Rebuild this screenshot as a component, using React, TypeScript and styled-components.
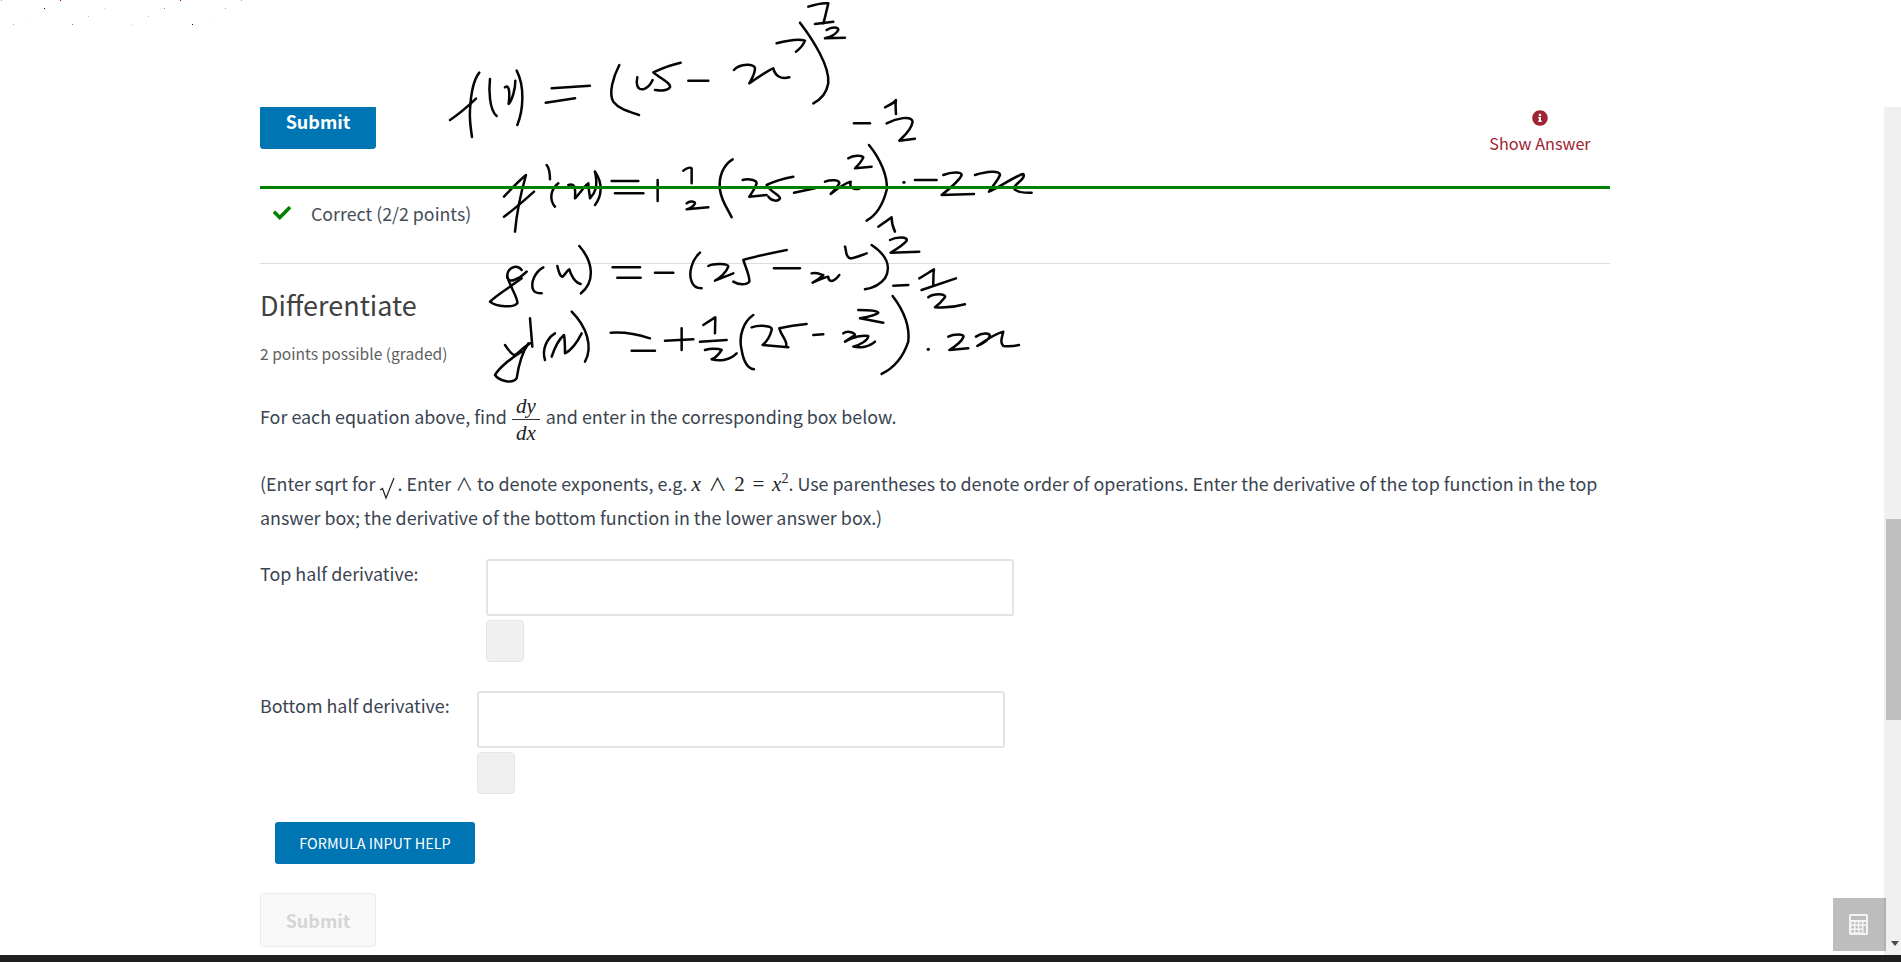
import React from "react";
import styled, { createGlobalStyle } from "styled-components";
import { FaCheck, FaInfoCircle } from "react-icons/fa";

const GlobalStyle = createGlobalStyle`
  html, body {
    margin: 0;
    padding: 0;
    height: 100%;
    overflow: hidden;
    background: #fff;
  }
  body {
    font-family: "Noto Sans CJK SC", "Open Sans", sans-serif;
    color: #3a4450;
  }
`;

const Page = styled.div`
  position: relative;
  width: 1901px;
  height: 962px;
  overflow: hidden;
  background: #fff;
`;

const Content = styled.main`
  width: 1350px;
  margin-left: 260px;
  padding-top: 107px;
  display: flex;
  flex-direction: column;
`;

const ActionRow = styled.div`
  display: flex;
  justify-content: space-between;
  height: 79px;
`;

const SubmitButton = styled.button<{ $disabled?: boolean }>`
  width: 116px;
  height: ${(p) => (p.$disabled ? "54px" : "42px")};
  padding: 0 0 ${(p) => (p.$disabled ? "0" : "15px")};
  border: 1px solid ${(p) => (p.$disabled ? "#ececec" : "#0075b4")};
  border-radius: ${(p) => (p.$disabled ? "3px" : "0 0 3px 3px")};
  background: ${(p) => (p.$disabled ? "#f9f9f9" : "#0075b4")};
  color: ${(p) => (p.$disabled ? "#d5d5d5" : "#fff")};
  font: 700 18px/24px "Noto Sans CJK SC", sans-serif;
`;

const ShowAnswer = styled.div`
  width: 102px;
  margin-right: 19px;
  padding-top: 3px;
  display: flex;
  flex-direction: column;
  align-items: center;
  gap: 5px;
  color: #9e2333;
  font-size: 16.2px;
  line-height: 24px;
  white-space: nowrap;

  svg {
    width: 16px;
    height: 16px;
  }
`;

const StatusBar = styled.div`
  position: relative;
  z-index: 2;
  height: 3px;
  background: #008100;
`;

const StatusRow = styled.div`
  height: 75px;
  padding: 10px 0 0 13px;
  box-sizing: border-box;
  display: flex;
  align-items: flex-start;
  gap: 20px;
  border-bottom: 1px solid #dddddd;
  font-size: 17.8px;
  line-height: 28px;
  color: #454d58;

  svg {
    width: 18px;
    height: 18px;
    margin-top: 5px;
    color: #008100;
  }
`;

const Title = styled.h3`
  margin: 23px 0 0;
  font-size: 27px;
  font-weight: 400;
  line-height: 36px;
  color: #414141;
`;

const Grading = styled.div`
  margin-top: 18px;
  font-size: 15.6px;
  line-height: 24px;
  color: #5e5e5e;
`;

const Prompt = styled.p`
  margin: 28px 0 0;
  font-size: 17.9px;
  line-height: 34px;
  color: #3a4450;
`;

const Fraction = styled.span`
  display: inline-flex;
  flex-direction: column;
  align-items: center;
  vertical-align: middle;
  margin: 0 6px 0 5px;
  font: italic 21px/26px "Liberation Serif", serif;
  color: #222;

  span + span {
    border-top: 1px solid #333;
  }

  span {
    padding: 0 4px;
  }
`;

const Instructions = styled.p`
  margin: 20px 0 0;
  font-size: 17.9px;
  line-height: 34px;
  color: #3a4450;
`;

const MathText = styled.span`
  font-family: "Liberation Serif", serif;
  font-size: 21px;
  line-height: 1;
  word-spacing: 2.5px;
  color: #222;

  i {
    font-style: italic;
  }

  b {
    font: 400 18px/1 "Noto Sans CJK SC", sans-serif;
  }

  sup {
    font-size: 14px;
    line-height: 0;
  }
`;

const Radical = styled.svg`
  width: 18px;
  height: 24px;
  margin-left: 4px;
  vertical-align: -9px;
`;

const Field = styled.div<{ $first?: boolean }>`
  display: flex;
  margin-top: ${(p) => (p.$first ? "25px" : "29px")};
`;

const FieldLabel = styled.label<{ $width: number }>`
  width: ${(p) => p.$width}px;
  flex: none;
  font-size: 17.9px;
  line-height: 28px;
  color: #3a4450;
`;

const FieldBody = styled.div`
  display: flex;
  flex-direction: column;
  gap: 4px;
`;

const AnswerInput = styled.input`
  width: 528px;
  height: 57px;
  box-sizing: border-box;
  border: 2px solid #e3e3e3;
  border-radius: 3px;
  background: #fff;
`;

const StatusBox = styled.div`
  width: 38px;
  height: 42px;
  box-sizing: border-box;
  border: 1px solid #e5e5e5;
  border-radius: 4px;
  background: #f0f0f0;
`;

const HelpButton = styled.button`
  width: 200px;
  height: 42px;
  margin: 28px 0 0 15px;
  padding: 0;
  border: 0;
  border-radius: 3px;
  background: #0075b4;
  color: #fff;
  font: 400 14.4px/20px "Noto Sans CJK SC", sans-serif;
`;

const FooterSubmit = styled.div`
  margin-top: 29px;
`;

const BottomBar = styled.div`
  position: absolute;
  left: 0;
  right: 0;
  bottom: 0;
  z-index: 4;
  height: 7px;
  background: #1f1f1f;
`;

const Scrollbar = styled.div`
  position: absolute;
  top: 107px;
  right: 0;
  bottom: 0;
  width: 17px;
  z-index: 2;
  background: #f0f0f0;
`;

const ScrollThumb = styled.div`
  position: absolute;
  top: 412px;
  right: 0;
  width: 15px;
  height: 201px;
  background: #bfbfbf;
`;

const ScrollArrow = styled.div`
  position: absolute;
  right: 2px;
  bottom: 16px;
  width: 0;
  height: 0;
  border-left: 4.5px solid transparent;
  border-right: 4.5px solid transparent;
  border-top: 5px solid #4a4a4a;
`;

const CalculatorButton = styled.div`
  position: absolute;
  left: 1833px;
  top: 898px;
  z-index: 3;
  width: 53px;
  height: 53px;
  box-sizing: border-box;
  border-right: 2px solid #b0b0b0;
  display: flex;
  align-items: center;
  justify-content: center;
  background: #bdbdbd;
`;

const InkLayer = styled.svg`
  position: absolute;
  left: 0;
  top: 0;
  z-index: 1;
  width: 1901px;
  height: 962px;
  pointer-events: none;
`;

// handwriting strokes, each group in the pixel space of a 3x crop at (x, y)
const strokes: { x: number; y: number; paths: string[]; dots?: [number, number][] }[] = [
  {
    x: 440,
    y: 0,
    paths: [
      "M118 218C100 240 92 290 90 330C88 355 92 385 96 411",
      "M30 360C60 340 85 318 108 296",
      "M150 237C146 270 148 330 170 348",
      "M195 262C212 250 208 295 206 312C216 300 226 270 226 242",
      "M230 212C255 260 250 330 232 375",
      "M335 265L450 257",
      "M317 308L405 295",
      "M538 195C520 230 505 280 520 305C540 330 570 335 597 345",
      "M592 232C588 250 590 270 610 268C630 262 635 245 638 240",
      "M722 188C690 195 665 205 640 217C660 235 695 250 690 262C680 275 660 272 645 270",
      "M745 242L805 242",
      "M882 210C900 190 945 190 945 205C945 225 930 245 928 250C950 235 985 210 1000 205C1005 225 1020 240 1048 232",
      "M1010 130C1040 122 1075 115 1095 122C1090 135 1075 150 1068 155",
      "M1080 68C1120 120 1170 200 1165 250C1160 280 1140 300 1120 310",
      "M1105 20C1130 12 1150 8 1165 10C1160 30 1155 55 1150 70",
      "M1125 72L1180 65",
      "M1160 90C1175 80 1195 80 1195 90C1190 100 1175 110 1155 115L1215 113",
    ],
  },
  {
    x: 490,
    y: 100,
    paths: [
      "M1092 70L1140 70",
      "M1185 22C1200 15 1215 5 1218 0C1215 15 1218 30 1218 42",
      "M1190 70C1220 55 1265 45 1268 65C1265 90 1240 110 1228 122L1275 116",
      "M42 290C65 265 90 240 108 225C95 270 80 340 75 395",
      "M42 350C70 330 110 295 132 275",
      "M170 195C178 205 180 225 180 238",
      "M205 250C180 270 178 300 195 320",
      "M235 255C250 250 258 255 255 295C270 280 285 255 295 250C295 270 300 285 300 295C315 280 325 260 315 215",
      "M315 215C340 250 335 290 315 315",
      "M365 243L445 243",
      "M375 280L460 280",
      "M480 263L538 263",
      "M503 240L503 303",
      "M580 212C590 205 600 200 605 205L605 250",
      "M585 262L632 262",
      "M590 310C600 300 615 305 615 310C610 320 600 325 590 328L655 322",
      "M728 178C700 195 685 230 690 270C695 305 715 330 725 352",
      "M758 240C775 235 800 240 800 250C795 265 785 280 778 290L830 285",
      "M910 230C880 235 850 245 830 255C840 275 870 285 870 295C865 305 845 305 835 290",
      "M912 278L975 265",
      "M1005 245C1025 238 1050 240 1048 250C1042 262 1030 275 1022 282C1040 268 1065 250 1082 245C1078 260 1085 270 1108 266",
      "M1075 175C1090 165 1115 165 1120 172C1115 185 1105 195 1095 205L1145 200",
      "M1137 135C1170 175 1195 230 1190 270C1180 310 1160 345 1130 362",
      "M1275 240L1340 240",
      "M1360 225C1385 215 1415 215 1415 225C1410 240 1380 265 1355 285L1452 282",
      "M1455 225C1490 215 1530 210 1530 225C1525 240 1505 262 1497 275C1530 262 1580 225 1600 222C1610 235 1570 255 1572 265C1580 280 1610 278 1625 278",
    ],
    dots: [[1242, 247]],
  },
  {
    x: 480,
    y: 210,
    paths: [
      "M1195 50C1210 40 1225 30 1235 22C1235 40 1240 55 1245 65",
      "M1230 90C1250 80 1285 80 1280 92C1270 105 1245 120 1232 128L1318 125",
      "M125 180C110 160 80 175 82 200C85 225 120 205 140 185",
      "M82 200C90 230 115 265 112 280C100 295 50 290 30 275C50 255 85 235 125 205",
      "M190 172C165 185 150 220 160 240C165 250 175 250 185 250",
      "M232 168C236 185 240 200 248 200C255 195 260 182 268 178C272 195 285 218 302 222",
      "M298 108C335 150 350 210 303 250",
      "M398 172L480 172",
      "M412 203L482 203",
      "M525 188L580 188",
      "M660 128C635 150 625 190 635 215C640 230 650 235 665 235",
      "M685 168C700 160 745 160 745 170C740 185 720 205 705 212L760 190",
      "M920 120C870 130 820 140 790 150C800 180 810 200 808 215C800 225 775 225 760 215",
      "M882 175L960 175",
      "M995 190C1010 185 1025 195 1030 195C1020 205 1005 215 998 218C1015 210 1040 200 1045 200C1045 210 1055 225 1078 195",
      "M1095 110C1100 120 1095 140 1110 145C1125 145 1145 135 1160 130",
      "M1175 105C1220 135 1235 170 1215 205C1200 225 1175 235 1155 238",
      "M1240 227L1285 225",
      "M1318 205C1335 195 1350 185 1362 178C1360 195 1360 210 1360 225",
      "M1325 240L1428 205",
      "M1345 262C1360 250 1400 250 1395 262C1385 275 1375 285 1365 292C1400 295 1430 290 1455 283",
      "M1238 258C1270 300 1290 350 1285 395C1270 440 1240 475 1205 492",
      "M75 405C85 420 95 435 105 435C115 430 125 415 150 400",
      "M145 400C125 430 115 470 110 505C95 525 55 510 45 495C60 470 100 440 125 425",
      "M150 325C152 350 155 385 157 410",
      "M225 370C200 385 185 420 195 450",
      "M215 440C225 410 240 385 252 375C255 390 255 410 255 430C275 420 295 390 305 370",
      "M275 305C320 350 340 410 315 455",
      "M392 368C430 365 480 375 510 385",
      "M455 422L525 422",
      "M555 392L640 388",
      "M605 355L605 420",
      "M670 345C685 335 700 325 706 322L705 370",
      "M660 395L740 390",
      "M675 420C690 415 715 415 725 420C715 435 705 445 695 448C720 455 750 450 770 430",
      "M820 315C790 335 775 380 785 420C790 450 800 475 822 478",
      "M815 352C835 345 880 345 875 360C870 380 860 395 848 405L925 412",
      "M980 342C950 345 920 350 898 355C905 380 925 395 918 410",
      "M1000 375L1030 373",
      "M1090 370C1105 360 1125 370 1125 375L1095 395C1120 380 1150 375 1165 378C1165 390 1140 405 1120 410C1140 415 1170 410 1185 395",
      "M1135 300C1160 300 1190 300 1195 308C1190 315 1165 320 1140 325L1210 338",
      "M1405 380C1420 372 1455 370 1450 382C1445 395 1425 410 1408 420L1465 415",
      "M1488 380C1510 365 1530 370 1530 378C1525 392 1505 402 1492 408C1515 392 1550 370 1570 365C1565 385 1560 400 1570 408C1590 410 1605 408 1617 405",
    ],
    dots: [[1345, 418]],
  },
];

// the few stray pixels along the top edge
const specks: [number, number, string][] = [
  [1, 0, "#d09a50"], [60, 0, "#d00000"], [180, 0, "#d00000"], [241, 0, "#d09a50"],
  [44, 8, "#200000"], [104, 8, "#ffc8d0"], [164, 8, "#ff6060"], [225, 8, "#d09a50"],
  [28, 16, "#f0f0b0"], [88, 16, "#ffa0a0"], [148, 16, "#ffa0a0"], [208, 16, "#f0f0b0"],
  [13, 24, "#d09a50"], [72, 24, "#ff5050"], [132, 24, "#ffc8c8"], [192, 24, "#200000"],
];

const Ink = () => (
  <InkLayer viewBox="0 0 1901 962" fill="none">
    {specks.map(([x, y, color]) => (
      <rect key={`${x}-${y}`} x={x} y={y} width={1} height={1} fill={color} />
    ))}
    {strokes.map((group) => (
      <g key={group.x} transform={`translate(${group.x} ${group.y}) scale(0.3333)`}>
        {group.paths.map((d) => (
          <path key={d} d={d} stroke="#050505" strokeWidth={7.5} strokeLinecap="round" strokeLinejoin="round" />
        ))}
        {group.dots?.map(([cx, cy]) => (
          <circle key={cx} cx={cx} cy={cy} r={5} fill="#050505" />
        ))}
      </g>
    ))}
  </InkLayer>
);

const CalculatorIcon = () => (
  <svg width="19" height="21" viewBox="0 0 19 21">
    <rect width="19" height="21" rx="1.5" fill="#f3f3f3" />
    <rect x="2" y="2" width="15" height="4" fill="#bdbdbd" />
    {[8, 12, 16].map((y) =>
      [2.5, 6.5, 10.5].map((x) => <rect key={`${x}-${y}`} x={x} y={y} width="2.4" height="2.4" fill="#bdbdbd" />)
    )}
    <rect x="14.5" y="8" width="2.4" height="2.4" fill="#bdbdbd" />
    <rect x="14.5" y="12" width="2.4" height="7" fill="#bdbdbd" />
  </svg>
);

export default function App() {
  return (
    <Page>
      <GlobalStyle />
      <Content>
        <ActionRow>
          <SubmitButton>Submit</SubmitButton>
          <ShowAnswer>
            <FaInfoCircle />
            Show Answer
          </ShowAnswer>
        </ActionRow>
        <StatusBar />
        <StatusRow>
          <FaCheck />
          Correct (2/2 points)
        </StatusRow>
        <Title>Differentiate</Title>
        <Grading>2 points possible (graded)</Grading>
        <Prompt>
          For each equation above, find
          <Fraction>
            <span>dy</span>
            <span>dx</span>
          </Fraction>
          and enter in the corresponding box below.
        </Prompt>
        <Instructions>
          (Enter sqrt for
          <Radical viewBox="0 0 18 24" fill="none">
            <path d="M1 14L3.5 12.5L7 22L15 2" stroke="#222" strokeWidth={1.2} />
          </Radical>
          . Enter ∧ to denote exponents, e.g.{" "}
          <MathText>
            <i>x</i> <b>∧</b> 2 = <i>x</i>
            <sup>2</sup>
          </MathText>
          . Use parentheses to denote order of operations. Enter the derivative of the top function in the top answer
          box; the derivative of the bottom function in the lower answer box.)
        </Instructions>
        <Field $first>
          <FieldLabel $width={226}>Top half derivative:</FieldLabel>
          <FieldBody>
            <AnswerInput />
            <StatusBox />
          </FieldBody>
        </Field>
        <Field>
          <FieldLabel $width={217}>Bottom half derivative:</FieldLabel>
          <FieldBody>
            <AnswerInput />
            <StatusBox />
          </FieldBody>
        </Field>
        <HelpButton>FORMULA INPUT HELP</HelpButton>
        <FooterSubmit>
          <SubmitButton $disabled>Submit</SubmitButton>
        </FooterSubmit>
      </Content>
      <Ink />
      <CalculatorButton>
        <CalculatorIcon />
      </CalculatorButton>
      <Scrollbar>
        <ScrollThumb />
        <ScrollArrow />
      </Scrollbar>
      <BottomBar />
    </Page>
  );
}
